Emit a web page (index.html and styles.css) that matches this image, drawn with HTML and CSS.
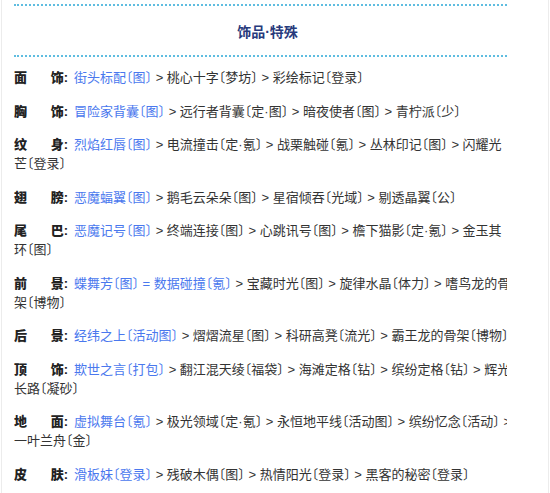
FILE: index.html
```html
<!DOCTYPE html>
<html lang="zh-CN">
<head>
<meta charset="utf-8">
<link rel="stylesheet" href="styles.css">
</head>
<body>
<div class="frame">
  <div class="panel">
    <h2 class="title">饰品·特殊</h2>
    <div class="list">
      <p class="row"><span class="label"><b>面</b><b>饰:</b></span><a class="lk">街头标配〔图〕</a> &gt; 桃心十字〔梦坊〕 &gt; 彩绘标记〔登录〕</p>
      <p class="row"><span class="label"><b>胸</b><b>饰:</b></span><a class="lk">冒险家背囊〔图〕</a> &gt; 远行者背囊〔定·图〕 &gt; 暗夜使者〔图〕 &gt; 青柠派〔少〕</p>
      <p class="row"><span class="label"><b>纹</b><b>身:</b></span><a class="lk">烈焰红唇〔图〕</a> &gt; 电流撞击〔定·氪〕 &gt; 战栗触碰〔氪〕 &gt; 丛林印记〔图〕 &gt; 闪耀光芒〔登录〕</p>
      <p class="row"><span class="label"><b>翅</b><b>膀:</b></span><a class="lk">恶魔蝠翼〔图〕</a> &gt; 鹅毛云朵朵〔图〕 &gt; 星宿倾吞〔光域〕 &gt; 剔透晶翼〔公〕</p>
      <p class="row"><span class="label"><b>尾</b><b>巴:</b></span><a class="lk">恶魔记号〔图〕</a> &gt; 终端连接〔图〕 &gt; 心跳讯号〔图〕 &gt; 檐下猫影〔定·氪〕 &gt; 金玉其环〔图〕</p>
      <p class="row"><span class="label"><b>前</b><b>景:</b></span><a class="lk">蝶舞芳〔图〕 = 数据碰撞〔氪〕</a> &gt; 宝藏时光〔图〕 &gt; 旋律水晶〔体力〕 &gt; 嗜鸟龙的骨架〔博物〕</p>
      <p class="row"><span class="label"><b>后</b><b>景:</b></span><a class="lk">经纬之上〔活动图〕</a> &gt; 熠熠流星〔图〕 &gt; 科研高凳〔流光〕 &gt; 霸王龙的骨架〔博物〕</p>
      <p class="row"><span class="label"><b>顶</b><b>饰:</b></span><a class="lk">欺世之言〔打包〕</a> &gt; 翻江混天绫〔福袋〕 &gt; 海滩定格〔钻〕 &gt; 缤纷定格〔钻〕 &gt; 辉光长路〔凝砂〕</p>
      <p class="row"><span class="label"><b>地</b><b>面:</b></span><a class="lk">虚拟舞台〔氪〕</a> &gt; 极光领域〔定·氪〕 &gt; 永恒地平线〔活动图〕 &gt; 缤纷忆念〔活动〕 &gt; 一叶兰舟〔金〕</p>
      <p class="row"><span class="label"><b>皮</b><b>肤:</b></span><a class="lk">滑板妹〔登录〕</a> &gt; 残破木偶〔图〕 &gt; 热情阳光〔登录〕 &gt; 黑客的秘密〔登录〕</p>
    </div>
  </div>
</div>
</body>
</html>
```

FILE: styles.css
```css
* { box-sizing: border-box; }
html, body {
  margin: 0;
  padding: 0;
  background: #ffffff;
  height: 100%;
  overflow: hidden;
}
body {
  font-family: "Liberation Sans", "Noto Sans CJK SC", sans-serif;
  font-size: 13px;
  color: #333333;
  font-feature-settings: "halt";
}
.frame {
  height: 100%;
  margin: 0 1px;
  border-left: 1px solid #ececec;
  border-right: 1px solid #ececec;
  padding: 4px 0 0 12px;
}
.panel {
  width: 493px;
  overflow: hidden;
}
.title {
  margin: 0;
  border-top: 2px dotted #5fbde0;
  border-bottom: 2px dotted #5fbde0;
  height: 53px;
  display: flex;
  align-items: center;
  justify-content: center;
  font-size: 14px;
  font-weight: bold;
  color: #283a7c;
  padding-left: 14px;
}
.list {
  width: 497px;
  padding-top: 11px;
}
.row {
  margin: 0 0 14.5px;
  line-height: 19px;
}
.label {
  display: inline-flex;
  justify-content: space-between;
  width: 54px;
  margin-right: 6px;
  font-weight: bold;
  color: #222222;
}
.lk {
  color: #4a78ee;
  text-decoration: none;
}
```
